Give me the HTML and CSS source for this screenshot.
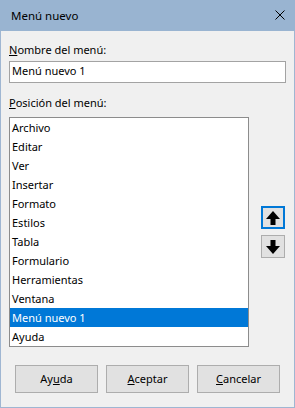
FILE: index.html
```html
<!DOCTYPE html>
<html lang="es">
<head>
<meta charset="utf-8">
<title>Menú nuevo</title>
<link rel="stylesheet" href="styles.css">
</head>
<body>
<div class="window">
  <div class="titlebar">
    <span class="title">Menú nuevo</span>
    <svg class="close" width="10" height="10" viewBox="0 0 10 10"><path d="M0.5 0.5 L9.5 9.5 M9.5 0.5 L0.5 9.5" stroke="#000" stroke-width="1" fill="none"/></svg>
  </div>
  <div class="content">
    <div class="label label-name"><u>N</u>ombre del menú:</div>
    <div class="textbox">Menú nuevo 1</div>
    <div class="label label-pos"><u>P</u>osición del menú:</div>
    <div class="list-row">
      <ul class="list">
        <li>Archivo</li>
        <li>Editar</li>
        <li>Ver</li>
        <li>Insertar</li>
        <li>Formato</li>
        <li>Estilos</li>
        <li>Tabla</li>
        <li>Formulario</li>
        <li>Herramientas</li>
        <li>Ventana</li>
        <li class="selected">Menú nuevo 1</li>
        <li>Ayuda</li>
      </ul>
      <div class="move-buttons">
        <div class="move-btn focused">
          <svg width="14" height="14" viewBox="0 0 14 14"><polygon points="7,0 14,8 9.5,8 9.5,14 4.5,14 4.5,8 0,8" fill="#000"/></svg>
        </div>
        <div class="move-btn">
          <svg width="14" height="14" viewBox="0 0 14 14"><polygon points="7,14 14,6 9.5,6 9.5,0 4.5,0 4.5,6 0,6" fill="#000"/></svg>
        </div>
      </div>
    </div>
    <div class="buttons">
      <div class="btn">Ay<u>u</u>da</div>
      <div class="btn"><u>A</u>ceptar</div>
      <div class="btn"><u>C</u>ancelar</div>
    </div>
  </div>
</div>
</body>
</html>
```

FILE: styles.css
```css
html, body {
  margin: 0;
  padding: 0;
}
body {
  font-family: "Noto Sans", "Liberation Sans", sans-serif;
  font-size: 11px;
  color: #000;
  background: #f0f0f0;
}
.window {
  width: 295px;
  height: 408px;
  box-sizing: border-box;
  border: 1px solid #9fb6d2;
  border-top: none;
  background: #f0f0f0;
}
.titlebar {
  height: 31px;
  margin: 0 -1px;
  background: #99b4d1;
  display: flex;
  align-items: center;
  justify-content: space-between;
  padding: 0 10px 1px 11px;
  box-sizing: border-box;
}
.title {
  font-size: 11.5px;
  line-height: 15px;
}
.close {
  display: block;
  margin-top: -1px;
}
.content {
  padding: 0 8px;
}
.label {
  line-height: 15px;
  height: 15px;
}
.label u, .btn u {
  text-underline-offset: 1px;
}
.label-name {
  padding-top: 11px;
}
.textbox {
  margin-top: 4px;
  height: 20px;
  line-height: 18px;
  border: 1px solid #a3a3a3;
  background: #fff;
  padding: 0 2px;
}
.label-pos {
  margin-top: 12px;
}
.list-row {
  margin-top: 7px;
  display: flex;
  align-items: center;
}
.list {
  list-style: none;
  margin: 0;
  padding: 0;
  width: 240px;
  height: 230px;
  box-sizing: border-box;
  border: 1px solid #8c8c8c;
  background: #fff;
}
.list li {
  height: 19px;
  line-height: 19px;
  padding-left: 2px;
}
.list li.selected {
  background: #0078d7;
  color: #fff;
}
.move-buttons {
  margin-left: 12px;
  display: flex;
  flex-direction: column;
  gap: 6px;
}
.move-btn {
  width: 24px;
  height: 23px;
  box-sizing: border-box;
  border: 1px solid #adadad;
  background: #e1e1e1;
  display: flex;
  align-items: center;
  justify-content: center;
}
.move-btn.focused {
  border: 2px solid #0078d7;
}
.move-btn svg {
  display: block;
}
.buttons {
  margin-top: 18px;
  display: flex;
  justify-content: center;
  gap: 8px;
}
.btn {
  width: 83px;
  height: 28px;
  box-sizing: border-box;
  border: 1px solid #adadad;
  background: #e1e1e1;
  text-align: center;
  line-height: 26px;
}
```
